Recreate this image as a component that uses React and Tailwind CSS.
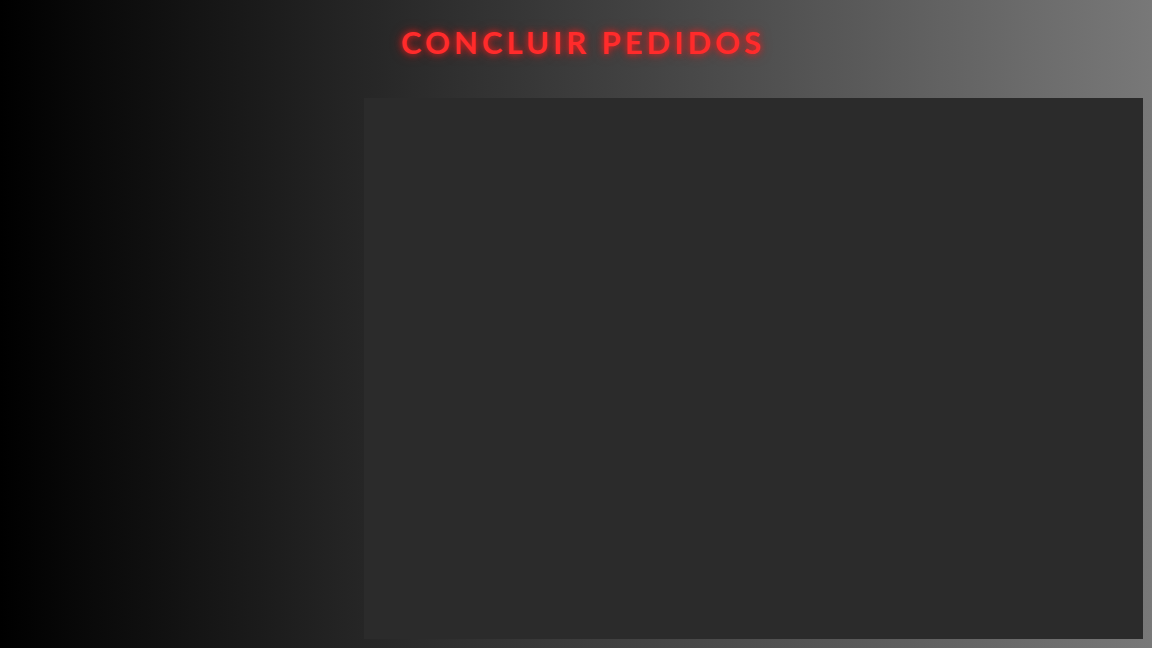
import React from "react";

const App = () => {
  return (
    <div className="min-h-screen w-full bg-[linear-gradient(to_right,#000000,#787878)] font-['Lato',sans-serif]">
      <header className="flex h-[98px] items-start justify-center pt-[24px] pl-[14px]">
        <h1 className="text-[31px] leading-[36px] font-bold tracking-[4px] text-[#ff2b2b] [text-shadow:0_0_6px_rgba(255,30,30,0.8),0_0_12px_rgba(255,0,0,0.5)]">
          CONCLUIR PEDIDOS
        </h1>
      </header>
      <div className="flex justify-end pr-[9px]">
        <div className="h-[541px] w-[779px] bg-[#2b2b2b]"></div>
      </div>
    </div>
  );
};

export default App;
